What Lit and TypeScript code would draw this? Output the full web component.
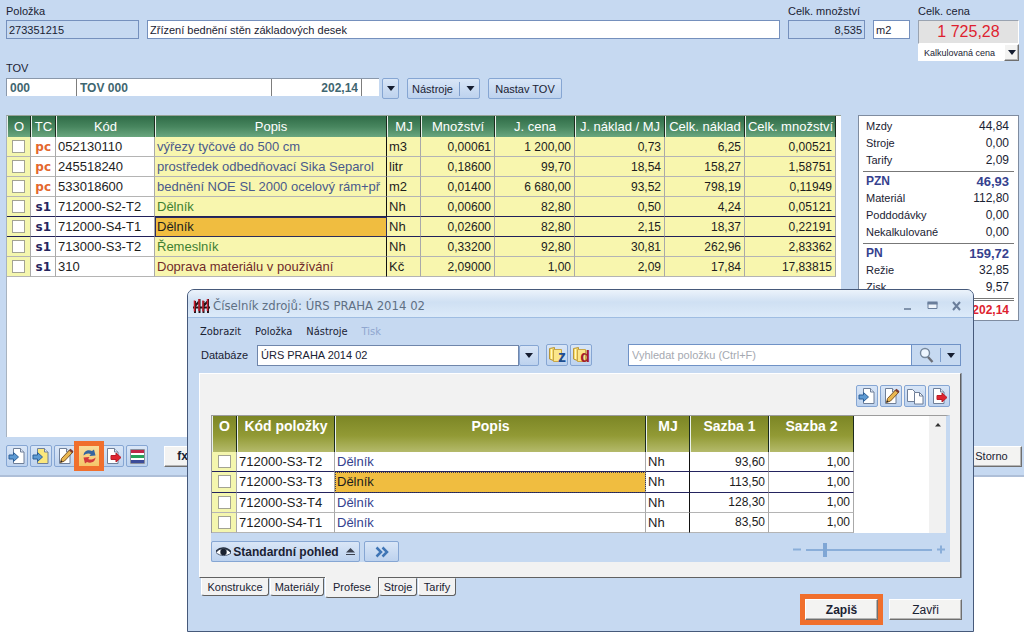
import { LitElement, html, css, svg } from "lit";
import { customElement } from "lit/decorators.js";

type Resource = [string, string, string, string, string, string, string, string, string, string];

const RESOURCES: Resource[] = [
  ["pc", "052130110", "výřezy tyčové do 500 cm", "m3", "0,00061", "1 200,00", "0,73", "6,25", "0,00521", "blue"],
  ["pc", "245518240", "prostředek odbedňovací Sika Separol", "litr", "0,18600", "99,70", "18,54", "158,27", "1,58751", "blue"],
  ["pc", "533018600", "bednění NOE SL 2000 ocelový rám+př", "m2", "0,01400", "6 680,00", "93,52", "798,19", "0,11949", "blue"],
  ["s1", "712000-S2-T2", "Dělník", "Nh", "0,00600", "82,80", "0,50", "4,24", "0,05121", "green"],
  ["s1", "712000-S4-T1", "Dělník", "Nh", "0,02600", "82,80", "2,15", "18,37", "0,22191", "picked"],
  ["s1", "713000-S3-T2", "Řemeslník", "Nh", "0,33200", "92,80", "30,81", "262,96", "2,83362", "green"],
  ["s1", "310", "Doprava materiálu v používání", "Kč", "2,09000", "1,00", "2,09", "17,84", "17,83815", "brown"],
];

const RATES = [
  ["712000-S3-T2", "Dělník", "Nh", "93,60", "1,00"],
  ["712000-S3-T3", "Dělník", "Nh", "113,50", "1,00"],
  ["712000-S3-T4", "Dělník", "Nh", "128,30", "1,00"],
  ["712000-S4-T1", "Dělník", "Nh", "83,50", "1,00"],
];

const page = (fill: string, x = 5) => svg`
  <path d=${`M${x} 1.5h7l3.5 3.5v11.500h-10.500z`} fill=${fill} stroke="#6f7f98"/>
  <path d=${`M${x + 7} 1.500v3.500h3.500`} fill="#dde6f3" stroke="#6f7f98"/>`;

const ICONS: Record<string, unknown> = {
  insert: svg`${page("#ffffff", 5.5)}<path d="M1 8h4.500V5.500l5 4.500-5 4.500v-2.500H1z" fill="#5d9ad3" stroke="#2c5f98"/>`,
  insertYellow: svg`${page("#fbe77c", 5.5)}<path d="M1 8h4.500V5.500l5 4.500-5 4.500v-2.500H1z" fill="#5d9ad3" stroke="#2c5f98"/>`,
  edit: svg`${page("#ffffff", 3.5)}<path d="M4.500 15.500l1-4 8.500-9 3 2.500-8.500 9z" fill="#e9b64f" stroke="#7a5426"/><path d="M13 3.500l1.500-1.700 3 2.500-1.500 1.700z" fill="#7d3a30"/><path d="M4.500 15.500l.6-2.300 1.500 1.300z" fill="#222"/>`,
  swap: svg`<path d="M3.500 8.500c.5-5 5-6 8.500-4.500L14 2.500l1.500 6-6 .5 1.300-2C8 5.800 6 6.500 3.500 8.500z" fill="#35659f"/><path d="M15.500 10.500c-.5 5-5 6-8.500 4.500L5 16.500l-1.500-6 6-.5-1.300 2c2.800 1.200 4.800.5 7.300-1.500z" fill="#d2383b"/>`,
  remove: svg`${page("#ffffff", 3.5)}<path d="M7 8.500h5V6l5 4.500-5 4.500v-2.500H7z" fill="#df2430" stroke="#b81c26"/>`,
  rows: svg`<path d="M2.500 2.500h14v14h-14z" fill="#fff" stroke="#8a8f9c"/><path d="M3 3h13v3H3z" fill="#c02548"/><path d="M3 8h13v3H3z" fill="#28a05b"/><path d="M3 13h13v3H3z" fill="#3b4b99"/>`,
  copy: svg`<path d="M1.500 2.500h5l3 3v9h-8z" fill="#fff" stroke="#6f7f98"/><path d="M8.500 5.500h5l3.500 3.500v8H8.500z" fill="#fff" stroke="#6f7f98"/><path d="M13.500 5.500V9H17" fill="none" stroke="#6f7f98"/>`,
  folder: svg`<path d="M1.500 2.500l5-1V15l-5-2z" fill="#f7dd6c" stroke="#b8963a"/><path d="M5.500 3.500h8v12h-8z" fill="#fbe68a" stroke="#c9a748"/><path d="M3.500 3v10" stroke="#fff6c2"/>`,
  search: svg`<circle cx="8" cy="7" r="4.500" fill="#eef6ff" stroke="#75879c" stroke-width="1.400"/><path d="M11 11l4.500 5" stroke="#6b6f78" stroke-width="2.400"/>`,
};

const icon = (name: string) => html`<svg class="ico" viewBox="0 0 19 19" aria-hidden="true">${ICONS[name]}</svg>`;
const tool = (name: string, label: string) => html`<button class="tool" aria-label=${label}>${icon(name)}</button>`;
const arrow = html`<svg class="arrow" viewBox="0 0 8 5" aria-hidden="true"><path d="M0 0h8L4 5z" fill="#151d30"/></svg>`;

const shared = css`
  :host {
    display: block;
    font-family: "Liberation Sans", Arial, sans-serif;
    font-size: 11px;
    color: #1a2233;
    box-sizing: border-box;
  }
  *, *::before, *::after { box-sizing: border-box; }
  button, input, select { font: inherit; color: inherit; margin: 0; border-radius: 0; }
  button { padding: 0; white-space: nowrap; }
  .ico { width: 19px; height: 19px; display: block; }
  .arrow { width: 8px; height: 5px; display: block; flex: none; }
  .tool, .soft {
    display: flex;
    align-items: center;
    justify-content: center;
    border: 1px solid #86a6d3;
    border-radius: 2px;
    background: linear-gradient(#d9e6f7, #bdd2ee);
  }
  .tool { width: 22px; height: 22px; flex: none; }
  .plain {
    background: #f3f3f2;
    border: 1px solid;
    border-color: #fff #6f6f6f #6f6f6f #fff;
    box-shadow: inset -1px -1px 0 #b5b5b5;
  }
  .check {
    appearance: none;
    display: block;
    width: 13px;
    height: 13px;
    margin: 0 auto;
    background: #fff;
    border: 1px solid #a3a393;
  }
  table { border-collapse: separate; border-spacing: 0; table-layout: fixed; }
  td, th { padding: 0 3px 0 2px; overflow: hidden; white-space: nowrap; }
  td { height: 20px; font-size: 13px; text-align: left; border-right: 1px solid #a9a9a9; border-bottom: 1px solid #b4b4b4; }
  td.box { padding: 0; background: #f4f6ae; }
  td.num { font-size: 12px; text-align: right; }
  th { font-size: 13px; color: #fff; text-align: center; border-left: 1px solid #e9f1ea; border-right: 1px solid #1b2a1e; }
`;

@customElement("source-dialog")
export class SourceDialog extends LitElement {
  static styles = [shared, css`
    :host { display: flex; flex-direction: column; background: #c6d9f1; border: 1px solid #46597a; border-radius: 7px 7px 0 0; overflow: hidden; padding-bottom: 6px; }
    .title { display: flex; align-items: center; height: 28px; padding: 4px 11px 0 5px; border-bottom: 1px solid #9fbde2; background: linear-gradient(#ecf3fb, #cfe0f3 45%, #dceaf9); font-family: "DejaVu Sans Condensed", "DejaVu Sans", sans-serif; font-size: 13px; color: #5f7084; }
    .logo { width: 17px; height: 16px; margin-right: 3px; }
    .name { flex: 1; }
    .win { background: none; border: 0; width: 12px; height: 14px; margin-left: 12px; display: flex; align-items: center; justify-content: center; }
    .win svg { width: 12px; height: 12px; }
    .menu { display: flex; gap: 14px; padding: 7px 12px 5px; line-height: 14px; font-family: "DejaVu Sans Condensed", "DejaVu Sans", sans-serif; font-size: 11px; }
    .menu button { background: none; border: 0; line-height: 14px; font-size: 11px; }
    .menu button:disabled { color: #8fa6cf; }
    .query { display: flex; align-items: center; height: 22px; padding: 0 12px 0 13px; }
    .query label { width: 56px; }
    .db { display: flex; width: 282px; height: 21px; margin-right: 7px; }
    .db select { flex: 1; appearance: none; background: #fff; border: 1px solid #6f86ab; padding: 0 3px; }
    .db .soft { width: 20px; }
    .folders { display: flex; gap: 2px; }
    .folder { position: relative; }
    .folder b { position: absolute; right: 1px; bottom: 0; font-size: 16px; line-height: 16px; color: #1d4e92; }
    .folder b.d { color: #a31e2b; }
    .search { display: flex; width: 333px; height: 22px; margin-left: auto; border: 1px solid #6f92c6; }
    .search input { flex: 1; min-width: 0; border: 0; border-right: 1px solid #6f92c6; padding: 0 3px; background: #fff; }
    .search input::placeholder { color: #a5a9b1; }
    .search button { background: none; border: 0; display: flex; align-items: center; justify-content: center; width: 28px; }
    .search button.more { width: 19px; }
    .split { width: 1px; margin: 3px 0; background: #7d9dcc; }
    .sheet { margin: 7px 12px 0 11px; padding: 11px 10px 15px 11px; background: #f2f2f2; border: 1px solid; border-color: #fff #616161 #616161 #fff; box-shadow: 1px 0 0 #8c98a8; }
    .tools { display: flex; justify-content: flex-end; gap: 2px; margin-bottom: 8px; }
    .grid { display: flex; background: #fff; border: 1px solid #9c9c9c; border-bottom: 0; border-right: 4px solid #c6d9f1; height: 118px; overflow: hidden; }
    .grid table { width: 642px; flex: none; }
    th { height: 36px; font-size: 14px; padding: 2px 0 0; vertical-align: top; background: linear-gradient(#7c8625, #929a35 55%, #b4ba6b); }
    td { color: #1c1c1c; }
    td.name { color: #35418e; }
    td.unit { border-right-color: #111; }
    tr.on td, tr.pre td { border-bottom-color: #23235e; }
    tr.on td.name { color: #1c1c1c; background: #f0bd40; outline: 1px dotted #3b3b55; outline-offset: -1px; }
    .bar { width: 17px; margin-left: auto; background: #f1f1f1; display: flex; justify-content: center; padding-top: 6px; }
    .foot { display: flex; align-items: center; height: 29px; padding-top: 8px; background: #c6d9f1; gap: 4px; }
    .foot .soft { height: 21px; }
    .view { width: 149px; font-size: 12px; font-weight: bold; gap: 2px; }
    .eye { width: 15px; height: 12px; }
    .view .up { width: 9px; height: 8px; margin-left: 5px; }
    .next { width: 35px; }
    .zoom { display: flex; align-items: center; gap: 4px; margin-left: auto; padding-right: 5px; padding-bottom: 4px; }
    .zoom svg { width: 9px; height: 9px; }
    .zoom input { appearance: none; width: 126px; height: 14px; background: linear-gradient(#8aaed9, #8aaed9) center / 100% 2px no-repeat; }
    .zoom input::-webkit-slider-thumb { appearance: none; width: 4px; height: 14px; background: #7fa6d5; }
    .tabs { display: flex; align-items: flex-start; padding-left: 13px; height: 21px; }
    .tab { height: 18px; padding: 0; background: #f2f2f2; border: 1px solid; border-color: transparent #616161 #616161 #fff; border-radius: 0 0 3px 3px; margin-right: 1px; }
    .tab.on { height: 21px; margin: 0; border-top: 0; position: relative; top: -1px; }
    .w68 { width: 68px; } .w54 { width: 54px; } .w39 { width: 38px; }
    .actions { display: flex; justify-content: flex-end; align-items: center; gap: 6px; padding-right: 11px; margin-top: -5px; }
    .actions .plain { width: 73px; height: 21px; font-size: 12px; }
    .mark { display: flex; border: 5px solid #f06f2d; }
    .mark .plain { font-weight: bold; }
  `];

  render() {
    return html`
      <div class="title">
        <svg class="logo" viewBox="0 0 17 16"><path d="M2 3v12M6.500 1v14M10.500 3v12M15 1v14M0 9.500h17M2 8l4.500-5M10.500 8L15 3" stroke="#251418" stroke-width="2" fill="none"/><path d="M1.500 2.500v11M6 1v12M10 2.500v11M14.500 1v12" stroke="#d01e2e" stroke-width="1.500"/></svg>
        <span class="name">Číselník zdrojů: ÚRS PRAHA 2014 02</span>
        <button class="win" aria-label="Minimalizovat"><svg viewBox="0 0 12 12"><path d="M2 9h7" stroke="#8093ac" stroke-width="2"/></svg></button>
        <button class="win" aria-label="Maximalizovat"><svg viewBox="0 0 12 12"><path d="M2 2.500h9v6H2z" fill="#eef4fb" stroke="#6a7e9b"/><path d="M1.500 3h10" stroke="#6a7e9b" stroke-width="3"/></svg></button>
        <button class="win" aria-label="Zavřít okno"><svg viewBox="0 0 12 12"><path d="M3 2l7 8M10 2l-7 8" stroke="#6a7e9b" stroke-width="2"/></svg></button>
      </div>
      <div class="menu"><button>Zobrazit</button><button>Položka</button><button>Nástroje</button><button disabled>Tisk</button></div>
      <div class="query">
        <label for="db">Databáze</label>
        <div class="db"><select id="db"><option>ÚRS PRAHA 2014 02</option></select><button class="soft" aria-label="Rozbalit">${arrow}</button></div>
        <div class="folders">
          <button class="tool folder">${icon("folder")}<b>z</b></button>
          <button class="tool folder">${icon("folder")}<b class="d">d</b></button>
        </div>
        <div class="search">
          <input type="text" aria-label="Vyhledat položku" placeholder="Vyhledat položku (Ctrl+F)">
          <button aria-label="Hledat">${icon("search")}</button><span class="split"></span>
          <button class="more" aria-label="Možnosti hledání">${arrow}</button>
        </div>
      </div>
      <div class="sheet">
        <div class="tools">${tool("insert", "Vložit")}${tool("edit", "Upravit")}${tool("copy", "Kopírovat")}${tool("remove", "Odebrat")}</div>
        <div class="grid">
          <table>
            <colgroup>${[25, 98, 311, 44, 79, 85].map((w) => html`<col style="width:${w}px">`)}</colgroup>
            <thead><tr>${["O", "Kód položky", "Popis", "MJ", "Sazba 1", "Sazba 2"].map((h) => html`<th>${h}</th>`)}</tr></thead>
            <tbody>${RATES.map((r, i) => html`
              <tr class=${["pre", "on", "", ""][i]}>
                <td class="box"><input class="check" type="checkbox" aria-label=${r[0]}></td>
                <td>${r[0]}</td><td class="name">${r[1]}</td><td class="unit">${r[2]}</td><td class="num">${r[3]}</td><td class="num">${r[4]}</td>
              </tr>`)}</tbody>
          </table>
          <div class="bar"><svg class="arrow" viewBox="0 0 8 5"><path d="M1 4.500h6L4 1z" fill="#333"/></svg></div>
        </div>
        <div class="foot">
          <button class="soft view">
            <svg class="eye" viewBox="0 0 15 12"><path d="M0 6.500C3 1.500 11 1.500 15 7 11 10.500 4 10.500 0 6.500z" fill="#fff" stroke="#4b5870"/><path d="M0 5.500C4 .5 11 1 15 6" fill="none" stroke="#26303f" stroke-width="1.500"/><circle cx="7.500" cy="6" r="3.200" fill="#1b2230"/></svg>
            Standardní pohled
            <svg class="up" viewBox="0 0 9 8"><path d="M0 4.500h9L4.500 0z" fill="#3c4250"/><path d="M0 6.500h9" stroke="#3c4250"/></svg>
          </button>
          <button class="soft next" aria-label="Další"><svg width="14" height="12" viewBox="0 0 14 12"><path d="M1.500 1.500L6 6l-4.500 4.500M7.500 1.500L12 6l-4.500 4.500" fill="none" stroke="#3f75b5" stroke-width="2.500"/></svg></button>
          <div class="zoom">
            <svg viewBox="0 0 9 9"><path d="M0 4.500h8" stroke="#8aaed9" stroke-width="2"/></svg>
            <input type="range" min="0" max="100" value="14" aria-label="Velikost řádků">
            <svg viewBox="0 0 9 9"><path d="M1 4.500h8M5 .5v8" stroke="#8aaed9" stroke-width="2"/></svg>
          </div>
        </div>
      </div>
      <div class="tabs">
        <button class="tab w68">Konstrukce</button><button class="tab w54">Materiály</button><button class="tab on w54">Profese</button><button class="tab w39">Stroje</button><button class="tab w39">Tarify</button>
      </div>
      <div class="actions"><div class="mark"><button class="plain">Zapiš</button></div><button class="plain">Zavři</button></div>
    `;
  }
}

@customElement("app-root")
export class AppRoot extends LitElement {
  static styles = [shared, css`
    :host { position: relative; min-height: 100vh; background: #fff; }
    .main { background: #c6d9f1; border-bottom: 2px solid #aebfd8; padding: 4px 5px 8px 6px; }
    .top { display: grid; grid-template-columns: 133px 1fr 77px 37px 101px; gap: 8px; align-items: start; }
    .field { display: flex; flex-direction: column; gap: 2px; min-width: 0; }
    .field.bare { padding-top: 16px; }
    label, .cap { line-height: 14px; white-space: nowrap; }
    .cap { display: block; margin-bottom: 3px; }
    .field input { width: 100%; height: 19px; border: 1px solid #7590bd; padding: 0 2px; background: #fff; }
    .field input.ro { background: #c6d9f1; }
    .field input.r { text-align: right; }
    .field input.price { height: 24px; background: #e2e2e2; border-color: #9aa3b0 #fff #fff #9aa3b0; color: #de1f2f; font-size: 16px; text-align: center; }
    .kind { display: flex; height: 17px; margin-top: -2px; background: #fff; }
    .kind select { appearance: none; flex: 1; min-width: 0; border: 0; background: #fff; font-size: 9px; padding: 0 0 0 6px; }
    .kind .plain { width: 15px; display: flex; align-items: center; justify-content: center; }
    .tov { display: flex; height: 20px; align-items: flex-start; margin-bottom: 17px; }
    .cells { display: flex; width: 373px; height: 18px; background: #fff; border-top: 1px solid #8a98ab; border-left: 1px solid #8a98ab; }
    .cells input { border: 0; border-right: 1px solid #7d7d7d; background: #fff; padding: 0 3px; min-width: 0; font-weight: bold; font-size: 12px; color: #3f6670; }
    .cells .a { width: 70px; } .cells .b { width: 195px; } .cells .c { width: 90px; text-align: right; }
    .tov .soft { height: 21px; }
    .drop { width: 17px; margin: 0 8px 0 3px; }
    .menu { width: 73px; gap: 6px; margin-right: 8px; }
    .menu i { width: 1px; height: 14px; background: #7d9dcc; }
    .menu .arrow { width: 9px; }
    .set { width: 74px; }
    .body { display: grid; grid-template-columns: 1fr 161px; gap: 17px; align-items: start; }
    .grid { height: 322px; background: #fff; border-top: 1px solid #96a296; border-left: 1px solid #a8b3c0; padding-right: 5px; overflow: hidden; }
    .grid table { width: 100%; }
    th { height: 21px; padding: 0; font-weight: normal; background: linear-gradient(#2f6c47, #47855e 50%, #6aa67f); }
    td { background: #f8f6ae; color: #1d1d1d; }
    td.white { background: #fff; }
    td.tc { background: #fff; padding: 0 4px 0 0; text-align: right; font-family: "DejaVu Sans", sans-serif; font-weight: bold; font-size: 12px; color: #26265f; }
    td.tc.pc { color: #e3672e; }
    td.desc { border-right-color: #111; }
    td.blue { color: #4a5a8c; } td.green { color: #3f8033; } td.brown { color: #702b2b; }
    td.picked { background: #f0bd40; outline: 1px solid #2c2c5c; outline-offset: -1px; }
    tr.line td { border-bottom-color: #20205a; }
    .sum { background: #fff; border: 1px solid #7f8ca0; padding: 2px 4px 1px; }
    dl { margin: 0; }
    dl div { display: flex; justify-content: space-between; height: 17px; line-height: 17px; padding: 0 5px 0 3px; }
    dd { margin: 0; font-size: 12px; }
    dl .total { font-size: 12px; font-weight: bold; color: #35418e; }
    .total dd { font-size: 13px; }
    dl .grand { font-weight: bold; color: #de1f2f; }
    hr { border: 0; height: 1px; margin: 2px 0 1px; background: #777; }
    hr.dbl { height: 3px; background: none; border: solid #777; border-width: 1px 0; }
    .bar { display: flex; gap: 2px; margin-top: 8px; height: 22px; align-items: center; }
    .hot { display: flex; margin: 0 -4px; border: 5px solid #f06f2d; z-index: 1; }
    .hot .tool { width: 20px; height: 20px; border: 0; border-radius: 0; background: linear-gradient(#f8dc9b, #f5c66a); }
    .bar .fx { width: 37px; height: 21px; margin-left: 14px; font-weight: bold; font-size: 12px; }
    .bar .storno { width: 61px; height: 21px; margin-left: auto; margin-right: -3px; }
    source-dialog { position: absolute; left: 187px; right: 50px; top: 289px; }
  `];

  render() {
    return html`
      <main class="main">
        <div class="top">
          <div class="field"><label for="code">Položka</label><input id="code" class="ro" readonly value="273351215"></div>
          <div class="field bare"><input aria-label="Popis položky" value="Zřízení bednění stěn základových desek"></div>
          <div class="field"><label for="qty">Celk. množství</label><input id="qty" class="ro r" readonly value="8,535"></div>
          <div class="field bare"><input aria-label="Měrná jednotka" value="m2"></div>
          <div class="field">
            <label for="price">Celk. cena</label><input id="price" class="price" readonly value="1 725,28">
            <div class="kind"><select aria-label="Druh ceny"><option>Kalkulovaná cena</option></select><button class="plain" aria-label="Rozbalit">${arrow}</button></div>
          </div>
        </div>
        <label class="cap" for="tov">TOV</label>
        <div class="tov">
          <div class="cells"><input id="tov" class="a" value="000"><input class="b" aria-label="Název TOV" value="TOV 000"><input class="c" aria-label="Cena TOV" value="202,14"></div>
          <button class="soft drop" aria-label="Vybrat TOV">${arrow}</button>
          <button class="soft menu">Nástroje<i></i>${arrow}</button>
          <button class="soft set">Nastav TOV</button>
        </div>
        <div class="body">
          <div class="grid">
            <table>
              <colgroup>${[24, 25, 99, 0, 34, 74, 80, 90, 80, 91].map((w) => html`<col style="width:${w ? w + "px" : "auto"}">`)}</colgroup>
              <thead><tr>${["O", "TC", "Kód", "Popis", "MJ", "Množství", "J. cena", "J. náklad / MJ", "Celk. náklad", "Celk. množství"].map((h) => html`<th>${h}</th>`)}</tr></thead>
              <tbody>${RESOURCES.map((r, i) => html`
                <tr class=${i === 3 || i === 4 ? "line" : ""}>
                  <td class="box"><input class="check" type="checkbox" aria-label=${r[1]}></td>
                  <td class="tc ${r[0]}">${r[0]}</td>
                  <td class="white">${r[1]}</td>
                  <td class="desc ${r[9]}">${r[2]}</td>
                  <td>${r[3]}</td>
                  ${r.slice(4, 9).map((v) => html`<td class="num">${v}</td>`)}
                </tr>`)}</tbody>
            </table>
          </div>
          <dl class="sum">
            <div><dt>Mzdy</dt><dd>44,84</dd></div>
            <div><dt>Stroje</dt><dd>0,00</dd></div>
            <div><dt>Tarify</dt><dd>2,09</dd></div>
            <hr>
            <div class="total"><dt>PZN</dt><dd>46,93</dd></div>
            <div><dt>Materiál</dt><dd>112,80</dd></div>
            <div><dt>Poddodávky</dt><dd>0,00</dd></div>
            <div><dt>Nekalkulované</dt><dd>0,00</dd></div>
            <hr>
            <div class="total"><dt>PN</dt><dd>159,72</dd></div>
            <div><dt>Režie</dt><dd>32,85</dd></div>
            <div><dt>Zisk</dt><dd>9,57</dd></div>
            <hr class="dbl">
            <div class="grand"><dt></dt><dd>202,14</dd></div>
          </dl>
        </div>
        <div class="bar">
          ${tool("insert", "Vložit")}${tool("insertYellow", "Vložit ze zdroje")}${tool("edit", "Upravit")}
          <div class="hot">${tool("swap", "Zaměnit")}</div>
          ${tool("remove", "Odebrat")}${tool("rows", "Barvy")}
          <button class="plain fx">fx</button>
          <button class="plain storno">Storno</button>
        </div>
      </main>
      <source-dialog></source-dialog>
    `;
  }
}
